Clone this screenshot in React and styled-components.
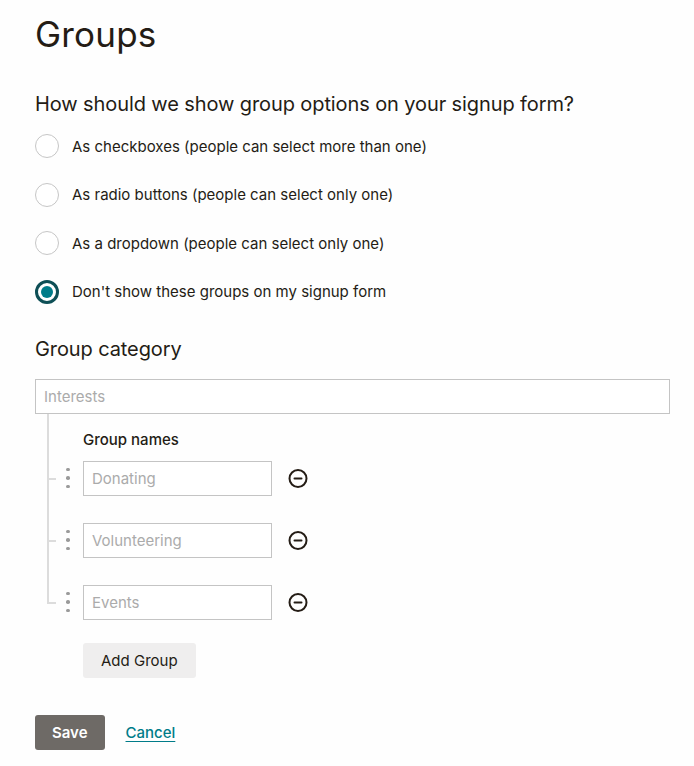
import React, { useState } from 'react';
import styled, { createGlobalStyle } from 'styled-components';

const GlobalStyle = createGlobalStyle`
  html, body {
    margin: 0;
    padding: 0;
    background: #fefefe;
  }
  body {
    font-family: Inter, "Open Sans", "Liberation Sans", sans-serif;
    color: #241c15;
  }
  * { box-sizing: border-box; }
`;

const Page = styled.main`
  padding: 14px 24px 20px 35px;
`;

const Title = styled.h1`
  margin: 0;
  font-size: 35px;
  line-height: 40px;
  font-weight: 400;
  letter-spacing: 0.2px;
`;

const SectionTitle = styled.h2`
  margin: ${(p) => p.$top || 0}px 0 0;
  font-size: 20px;
  line-height: 24px;
  font-weight: 400;
  letter-spacing: -0.1px;
`;

const RadioList = styled.div`
  display: flex;
  flex-direction: column;
  gap: 24.5px;
  margin-top: 18px;
`;

const RadioRow = styled.label`
  display: flex;
  align-items: center;
  gap: 13px;
  height: 24px;
  font-size: 15px;
  cursor: pointer;
`;

const RadioDot = styled.span`
  width: 24px;
  height: 24px;
  flex: none;
  border-radius: 50%;
  background: #fff;
  border: ${(p) => (p.$checked ? '3px solid #0e4f56' : '1px solid #c6c6c6')};
  display: flex;
  align-items: center;
  justify-content: center;

  &::after {
    content: '';
    display: ${(p) => (p.$checked ? 'block' : 'none')};
    width: 12px;
    height: 12px;
    border-radius: 50%;
    background: #007c89;
  }
`;

const TextInput = styled.input`
  display: block;
  width: ${(p) => p.$width || '100%'};
  height: 35px;
  padding: 0 8px;
  border: 1px solid #c4c4c4;
  border-radius: 0;
  background: #fff;
  font-family: inherit;
  font-size: 15px;
  color: #241c15;
  outline: none;

  &::placeholder {
    color: #ababab;
  }
`;

const CategoryInput = styled(TextInput)`
  margin-top: 18px;
`;

const Tree = styled.div`
  position: relative;
  margin-left: 12px;
  padding: 16px 0 0 16px;

  &::before {
    content: '';
    position: absolute;
    left: 0;
    top: 0;
    bottom: 17px;
    width: 2px;
    background: #dcdcdc;
  }
`;

const FieldLabel = styled.div`
  padding-left: 20px;
  font-size: 15px;
  line-height: 20px;
  font-weight: 500;
`;

const GroupRows = styled.div`
  display: flex;
  flex-direction: column;
  gap: 27px;
  margin-top: 11px;
`;

const GroupRow = styled.div`
  position: relative;
  display: flex;
  align-items: center;

  &::before {
    content: '';
    position: absolute;
    left: -16px;
    top: 50%;
    width: 9px;
    height: 2px;
    background: #dcdcdc;
  }
`;

const Handle = styled.span`
  width: 10px;
  margin-right: 10px;
  display: flex;
  flex-direction: column;
  align-items: center;
  gap: 5px;
  cursor: grab;

  i {
    width: 3.5px;
    height: 3.5px;
    border-radius: 50%;
    background: #9a9a9a;
  }
`;

const RemoveButton = styled.button`
  margin-left: 16px;
  padding: 0;
  border: 0;
  background: none;
  width: 20px;
  height: 20px;
  display: flex;
  align-items: center;
  justify-content: center;
  cursor: pointer;
  color: #241c15;
`;

const Button = styled.button`
  height: 35px;
  padding: 0 18px;
  border: 0;
  border-radius: 3px;
  font-family: inherit;
  font-size: 15px;
  cursor: pointer;

  ${(p) => p.$variant === 'secondary' && `
    background: #efeeee;
    color: #241c15;
    font-weight: 400;
  `}

  ${(p) => p.$variant === 'primary' && `
    background: #6e6a66;
    color: #fff;
    font-weight: 600;
    padding: 0 17px;
  `}
`;

const AddRow = styled.div`
  margin: 23px 0 0 48px;
`;

const Actions = styled.div`
  display: flex;
  align-items: center;
  gap: 21px;
  margin-top: 37px;
`;

const LinkButton = styled.a`
  color: #007c89;
  font-size: 15px;
  font-weight: 500;
  text-decoration: underline;
  text-underline-offset: 3px;
  cursor: pointer;
`;

const MinusCircle = () => (
  <svg width="21" height="21" viewBox="0 0 20 20" fill="none" stroke="currentColor" strokeWidth="2">
    <circle cx="10" cy="10" r="8.5" />
    <path d="M6.5 10h7" strokeLinecap="round" />
  </svg>
);

const OPTIONS = [
  'As checkboxes (people can select more than one)',
  'As radio buttons (people can select only one)',
  'As a dropdown (people can select only one)',
  "Don't show these groups on my signup form",
];

const GROUPS = ['Donating', 'Volunteering', 'Events'];

export default function App() {
  const [choice, setChoice] = useState(3);

  return (
    <Page>
      <GlobalStyle />
      <Title>Groups</Title>

      <SectionTitle $top={38}>How should we show group options on your signup form?</SectionTitle>
      <RadioList role="radiogroup">
        {OPTIONS.map((label, i) => (
          <RadioRow key={label} onClick={() => setChoice(i)}>
            <RadioDot $checked={choice === i} />
            {label}
          </RadioRow>
        ))}
      </RadioList>

      <SectionTitle $top={33}>Group category</SectionTitle>
      <CategoryInput placeholder="Interests" />

      <Tree>
        <FieldLabel>Group names</FieldLabel>
        <GroupRows>
          {GROUPS.map((name) => (
            <GroupRow key={name}>
              <Handle aria-hidden="true"><i /><i /><i /></Handle>
              <TextInput $width="189px" placeholder={name} />
              <RemoveButton type="button" aria-label={`Remove ${name}`}>
                <MinusCircle />
              </RemoveButton>
            </GroupRow>
          ))}
        </GroupRows>
      </Tree>

      <AddRow>
        <Button type="button" $variant="secondary">Add Group</Button>
      </AddRow>

      <Actions>
        <Button type="button" $variant="primary">Save</Button>
        <LinkButton>Cancel</LinkButton>
      </Actions>
    </Page>
  );
}
